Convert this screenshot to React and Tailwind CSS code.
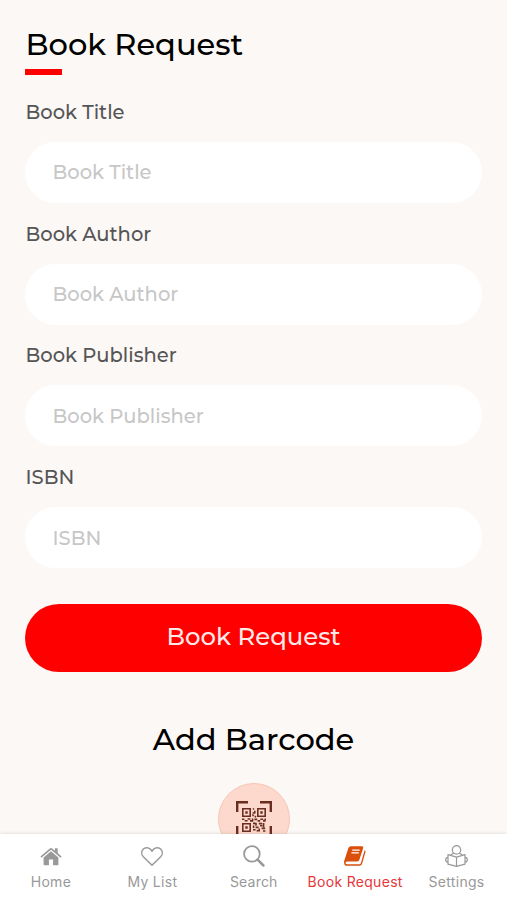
const fields = ['Book Title', 'Book Author', 'Book Publisher', 'ISBN'];

function BarcodeIcon() {
  return (
    <svg width="36" height="36" viewBox="0 0 36 36" fill="none" stroke="#6b2d20">
      <path d="M1.2 11V1.2H12M24 1.2h10.8V11M34.8 25v9.8H24M12 34.8H1.2V25" strokeWidth="2.4" />
      {/* finder squares */}
      <path d="M6.8 7.8h7.4v7.4H6.8zM21.8 7.8h7.4v7.4h-7.4zM6.8 22.8h7.4v7.4H6.8z" strokeWidth="1.6" />
      <path d="M9.3 11.5h2.4M24.3 11.5h2.4M9.3 26.5h2.4" strokeWidth="2.4" />
      {/* modules */}
      <path
        d="M16.8 8h1.4M18.8 9.8v2.4M16.6 12h2.6M17 13.2v2M18.6 15.6h1.6M6 18.2h2.4M8.6 19.8h3M11.6 18h2.8M14 19.9h3M16.6 17.6v3M18.4 18.4h2.8M21.6 19.9h2.6M24.4 18.2h2.8M27 19.9h2.6M29.2 17.4v2M17 22.4h2.4M20 21.8v3M17.6 24.4v2.6M19.6 26.4h3M22.8 22.6h3.4M24 24.8h2.4M27.6 22v4.2M25.6 27.4h3.6M17 28.8h2.6M20.6 29.8h3.4M23.2 27.6v2M27 30h2.4"
        strokeWidth="1.6"
      />
    </svg>
  );
}

function HomeIcon() {
  return (
    <svg width="22" height="19" viewBox="0 0 22 19" fill="#999">
      <path d="M11 4.2 18.4 10.4V17.4Q18.4 18.2 17.6 18.2H13.1V12.6H8.9V18.2H4.4Q3.6 18.2 3.6 17.4V10.4Z" />
      <path d="M.4 9.5 9.8 1.4Q11 .5 12.2 1.4L14.9 3.7V1.2H17.7V6.1L21.6 9.5 20.6 10.8 11 2.8 1.4 10.8Z" />
    </svg>
  );
}

function HeartIcon() {
  return (
    <svg width="22" height="19" viewBox="0 0 22 19" fill="none" stroke="#999" strokeWidth="1.5" strokeLinejoin="round">
      <path d="M11 18.2 2.3 9.8C.3 7.6.2 4.4 2.1 2.3 4.2.1 8.1.2 10 2.8L11 4.2 12 2.8C13.9.2 17.8.1 19.9 2.3 21.8 4.4 21.7 7.6 19.7 9.8Z" />
    </svg>
  );
}

function SearchIcon() {
  return (
    <svg width="22" height="22" viewBox="0 0 22 22" fill="none" stroke="#999">
      <circle cx="8.9" cy="8.9" r="7.8" strokeWidth="1.8" />
      <path d="M14.6 14.6 20.4 20.5" strokeWidth="2.5" strokeLinecap="round" />
    </svg>
  );
}

function BookIcon() {
  return (
    <svg width="22" height="20" viewBox="0 0 22 20" fill="none">
      <path d="M6.9.3H18Q19.7.3 19.2 2L15.3 14.1Q14.8 15.5 13.3 15.5H3.2Q1.5 15.5 1.5 17 1.6 18.2 3 18.2H15.2Q16.5 18.2 16.9 17L20.6 4.2Q21.9 4.9 21.5 6.1L18 18Q17.4 19.8 15.6 19.8H3.2Q.2 19.8.1 16.9V15.2L4.4 2.1Q5 .3 6.9.3Z" fill="#d94f0b" />
      <path d="M8.3 4.1H15.7M7.4 6.9H14.8" stroke="#fff" strokeWidth="1.2" />
    </svg>
  );
}

function ReaderIcon() {
  return (
    <svg width="23" height="22" viewBox="0 0 23 22" fill="none" stroke="#999" strokeWidth="1.2" strokeLinejoin="round">
      <circle cx="11.5" cy="4.9" r="4.2" />
      <path d="M11.5 12.1 3 9.7V19.2L11.5 21.4 20 19.2V9.7ZM11.5 12.1V21.4M5.2 10.2Q7.5 8.9 8.8 8M17.8 10.2Q15.5 8.9 14.2 8" />
      <path d="M3 12.3Q.7 12.4.7 14.7T3 17.1M20 12.3Q22.3 12.4 22.3 14.7T20 17.1" />
    </svg>
  );
}

const tabs = [
  { label: 'Home', Icon: HomeIcon, cls: 'tracking-[0.3px]' },
  { label: 'My List', Icon: HeartIcon, cls: 'tracking-[0.3px]' },
  { label: 'Search', Icon: SearchIcon, cls: 'tracking-[0.2px]' },
  { label: 'Book Request', Icon: BookIcon, cls: 'tracking-[0.3px]', active: true },
  { label: 'Settings', Icon: ReaderIcon, cls: 'tracking-[0.3px]' },
];

export default function App() {
  return (
    <div className="flex h-[900px] w-[507px] flex-col overflow-hidden bg-[#fcf8f5] font-['Montserrat','Inter',sans-serif] font-medium">
      <main className="min-h-0 flex-1 overflow-hidden px-[25px]">
        <h1 className="pt-6 pl-[0.5px] text-[30.5px] leading-10 whitespace-nowrap text-black">Book Request</h1>
        <div className="mt-[5px] h-1.5 w-[37px] bg-[#fe0000]" />

        <form className="mt-1.5">
          {fields.map((label) => (
            <div key={label}>
              <label className="flex h-[60.75px] items-center pt-0.5 pl-[0.5px] text-[19.5px] text-[#555]">{label}</label>
              <input
                type="text"
                placeholder={label}
                className="block h-[61px] w-full rounded-full bg-white px-[27.5px] text-[19.5px] outline-none placeholder:text-[#c7c7c7]"
              />
            </div>
          ))}
          <button
            type="button"
            className="mt-9 flex h-[68px] w-full items-center justify-center rounded-full bg-[#fe0000] pb-[3px] text-[24.4px] text-[#ffe9e6]"
          >
            Book Request
          </button>
        </form>

        <h2 className="mt-[47px] text-center text-[30.5px] leading-10 text-black">Add Barcode</h2>
        <div className="mx-auto mt-6 flex size-[72px] items-center justify-center rounded-full border border-[#f8c5b6] bg-[#fdd9cd]">
          <BarcodeIcon />
        </div>
      </main>

      <nav className="z-10 grid h-[66px] shrink-0 grid-cols-5 bg-white shadow-[0_-1px_3px_rgba(0,0,0,0.09)]">
        {tabs.map(({ label, Icon, cls, active }) => (
          <div key={label} className="flex flex-col items-center pt-[11px] pl-[0.5px]">
            <div className="flex h-[22px] items-center">
              <Icon />
            </div>
            <span
              className={`mt-1.5 font-['Inter',sans-serif] text-[14px] leading-[18px] font-normal whitespace-nowrap ${cls} ${active ? 'text-[#e5383b]' : 'text-[#999]'}`}
            >
              {label}
            </span>
          </div>
        ))}
      </nav>
    </div>
  );
}
